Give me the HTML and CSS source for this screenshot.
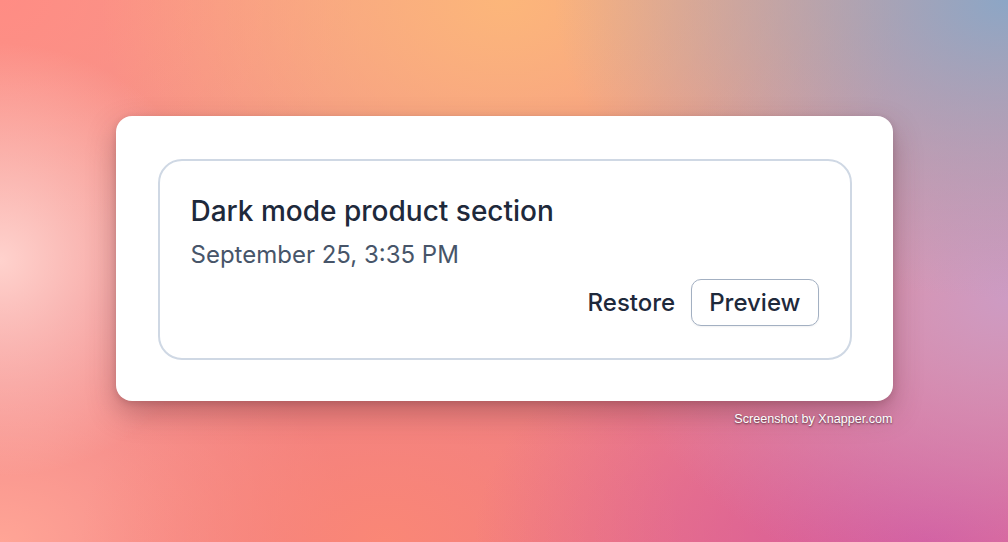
FILE: index.html
```html
<!DOCTYPE html>
<html lang="en">
<head>
<meta charset="utf-8">
<title>Version history</title>
<link rel="stylesheet" href="styles.css">
</head>
<body>
<div class="stage">
  <div class="frame">
    <div class="card">
      <div class="item">
        <h2 class="title">Dark mode product section</h2>
        <p class="date">September 25, 3:35 PM</p>
        <div class="actions">
          <button class="btn btn-ghost" type="button">Restore</button>
          <button class="btn btn-outline" type="button">Preview</button>
        </div>
      </div>
    </div>
    <div class="credit">Screenshot by Xnapper.com</div>
  </div>
</div>
</body>
</html>
```
FILE: styles.css
```css
html, body {
  margin: 0;
  padding: 0;
  width: 100%;
  height: 100%;
}

body {
  font-family: Inter, "Noto Sans", sans-serif;
  background-color: #f4868a;
  background-image:
    radial-gradient(ellipse 22% 40% at 0% 48%, rgba(255, 210, 205, 1) 0%, rgba(255, 200, 195, 0) 100%),
    radial-gradient(ellipse 45% 55% at 100% 0%, rgba(140, 166, 198, 1) 0%, rgba(150, 160, 195, 0) 100%),
    radial-gradient(ellipse 40% 55% at 50% 0%, rgba(252, 182, 122, 1) 0%, rgba(250, 175, 120, 0) 100%),
    radial-gradient(ellipse 40% 55% at 100% 55%, rgba(205, 155, 195, 1) 0%, rgba(205, 150, 190, 0) 100%),
    radial-gradient(ellipse 45% 50% at 92% 100%, rgba(212, 88, 158, 1) 0%, rgba(215, 95, 160, 0) 100%),
    radial-gradient(ellipse 30% 40% at 38% 100%, rgba(250, 135, 118, 1) 0%, rgba(250, 135, 118, 0) 100%),
    radial-gradient(ellipse 35% 45% at 0% 0%, rgba(255, 140, 132, 1) 0%, rgba(255, 140, 132, 0) 100%),
    radial-gradient(ellipse 35% 45% at 0% 100%, rgba(255, 165, 150, 1) 0%, rgba(255, 165, 150, 0) 100%),
    linear-gradient(180deg, #f59a8a 0%, #f08888 55%, #f07a82 100%);
}

.stage {
  width: 100%;
  height: 100%;
  display: flex;
  align-items: center;
  justify-content: center;
}

.frame {
  display: flex;
  flex-direction: column;
  align-items: flex-end;
}

.card {
  width: 777px;
  box-sizing: border-box;
  padding: 43px 41px 41px 42px;
  background: #ffffff;
  border-radius: 16px;
  box-shadow: 0 12px 28px rgba(90, 40, 50, 0.35), 0 2px 6px rgba(90, 40, 50, 0.18);
}

.item {
  border: 2px solid #cfd8e4;
  border-radius: 24px;
  padding: 33px 31px 32px 31px;
  display: flex;
  flex-direction: column;
}

.title {
  margin: 0;
  font-size: 28px;
  line-height: 34px;
  font-weight: 500;
  color: #1e293b;
}

.date {
  margin: 12px 0 0;
  font-size: 24px;
  line-height: 30px;
  font-weight: 400;
  color: #475569;
}

.actions {
  margin-top: 9px;
  display: flex;
  justify-content: flex-end;
  align-items: center;
  gap: 16px;
}

.btn {
  font-family: Inter, "Noto Sans", sans-serif;
  font-size: 24px;
  font-weight: 500;
  color: #1e293b;
  background: #ffffff;
  line-height: 29px;
  cursor: pointer;
}

.btn-ghost {
  border: 0;
  padding: 0;
  background: transparent;
}

.btn-outline {
  border: 1px solid #a3b0c2;
  border-radius: 10px;
  padding: 8px 17px;
  box-shadow: 0 1px 2px rgba(15, 23, 42, 0.06);
}

.credit {
  margin-top: 10px;
  font-family: "Liberation Sans", Arial, sans-serif;
  font-size: 12.6px;
  line-height: 16px;
  color: #ffffff;
  text-shadow: 0 1px 2px rgba(0, 0, 0, 0.6);
}
```
